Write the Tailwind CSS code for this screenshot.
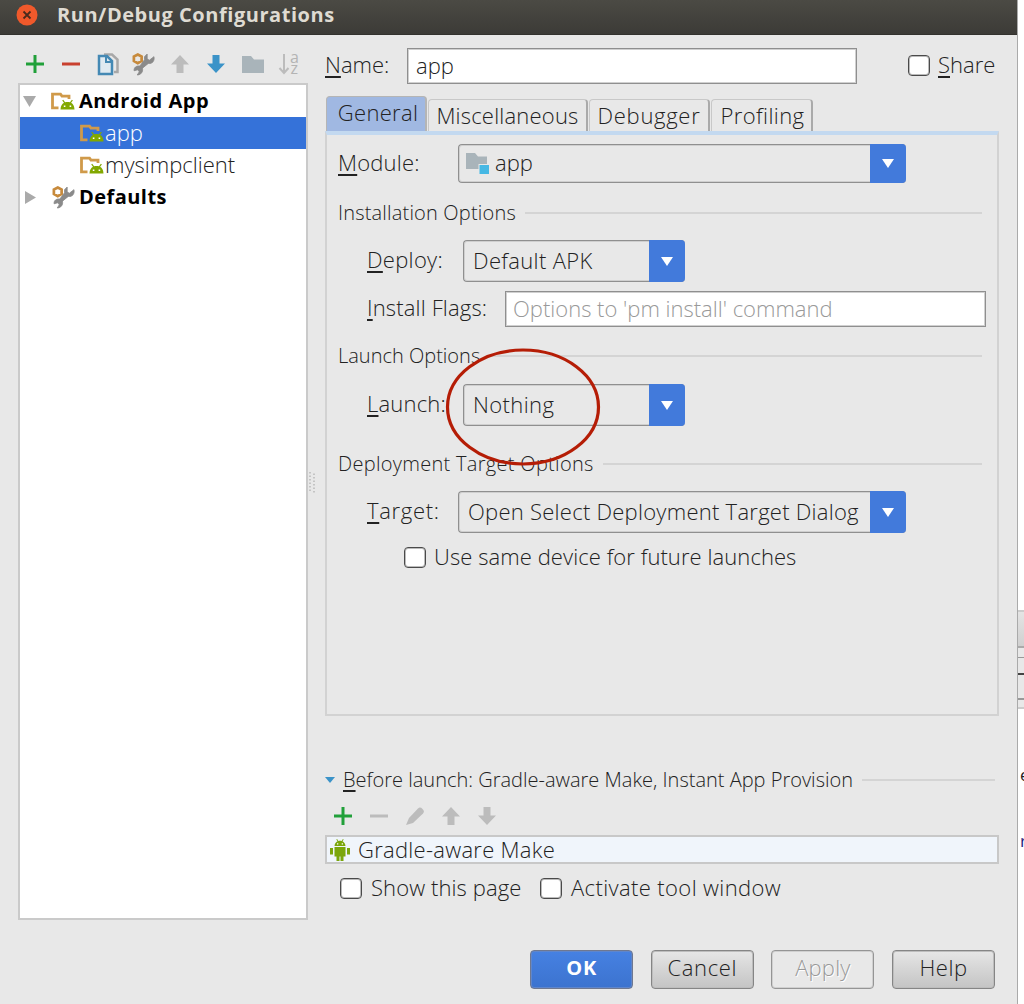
<!DOCTYPE html>
<html lang="en">
<head>
    <meta charset="UTF-8">
    <meta name="viewport" content="width=device-width, initial-scale=1.0">
    <title>Run/Debug Configurations</title>
    <script src="https://cdn.jsdelivr.net/npm/@tailwindcss/browser@4"></script>
</head>
<body class="flex w-[1024px] h-[1004px] overflow-hidden bg-white font-['Open_Sans',sans-serif] font-[330] text-[22px] leading-8 text-[#222] whitespace-nowrap">
    <!-- Shared icons -->
    <svg class="hidden">
        <symbol id="plus" viewBox="0 0 18 18"><path d="M7.5 0h3v7.5H18v3h-7.5V18h-3v-7.5H0v-3h7.5z"/></symbol>
        <symbol id="minus" viewBox="0 0 18 18"><path d="M0 7.500h18v3H0z"/></symbol>
        <symbol id="up" viewBox="0 0 18 18"><path d="M9 0l9 9.500h-5.500V18h-7V9.500H0z"/></symbol>
        <symbol id="down" viewBox="0 0 18 18"><path d="M9 18l9-9.500h-5.500V0h-7v8.500H0z"/></symbol>
        <symbol id="tools" viewBox="0 0 22 22">
            <path d="M5.500 1.500l3.700 2v4.200l-3.700 2-3.700-2V3.500z" fill="none" stroke="#c78a3c" stroke-width="2.600"/>
            <path d="M12 6.500V3.500L14.500 1v4.500l2 1.500 4.500-3.500c.8 4-1.500 7-5.500 6.500L10 14.500c.8 3.500-1.500 6.500-5 6.500l2-3-1.500-2-3.500 1c-.3-3 2-5 5.500-4.500z" fill="#8a8a8a" stroke="#8a8a8a" stroke-width=".8"/>
        </symbol>
        <symbol id="module" viewBox="0 0 24 18">
            <path d="M7.500 15.800H1.500V2.200h8l1.500 2h7V7" fill="none" stroke="#d09a4a" stroke-width="2.800"/>
            <path d="M9.500 17.500c.2-3.500 1.500-5.500 3.500-6.700l-1.800-2.300 1-.7 1.900 2.500c1.800-.5 3.200-.5 4.900 0l1.900-2.500 1 .7-1.800 2.300c2 1.200 3.200 3.200 3.400 6.700z" fill="#82a800"/>
            <path d="M12.800 13.500h1.600v1.600h-1.600zM18.600 13.500h1.600v1.600h-1.600z" fill="#fff"/>
        </symbol>
        <symbol id="arrow" viewBox="0 0 12 9"><path d="M0 0h12L6 9z" fill="#fff"/></symbol>
    </svg>

    <div class="relative flex flex-col w-[1018px] h-full shrink-0 bg-[#e8e8e8] border-r border-[#aaa]">
        <!-- Title bar -->
        <div class="flex items-center h-[35px] pl-4 pb-[5px] bg-linear-to-b from-[#4b4a44] to-[#3c3b37] border-b border-[#33322e]">
            <svg class="w-[22px] h-[22px]" viewBox="0 0 22 22"><circle cx="11" cy="11" r="10.500" fill="#f0592b"/><path d="M7.500 7.500l7 7M14.500 7.500l-7 7" stroke="#4a2a1c" stroke-width="1.800"/></svg>
            <span class="ml-[19px] font-bold text-[20px] tracking-[0.54px] text-[#dfdbd2]">Run/Debug Configurations</span>
        </div>

        <div class="flex h-[885px] pl-[18px]">
            <!-- Configuration tree -->
            <div class="w-[290px] flex flex-col">
                <div class="grid grid-cols-8 h-[48px] pt-[10px] -ml-[1px] mr-[1px] items-center justify-items-center">
                    <svg class="w-[18px] h-[18px]" fill="#21a03a"><use href="#plus"/></svg>
                    <svg class="w-[18px] h-[18px]" fill="#c9402f"><use href="#minus"/></svg>
                    <svg class="w-[22px] h-[24px]" viewBox="0 0 22 24" fill="none"><path d="M7 2.500h8l5.500 5V20H17" stroke="#a8a8a8" stroke-width="2.500"/><path d="M2 4h8l5 5v13H2z" fill="#dfeaf1" stroke="#4489b4" stroke-width="2.500"/><path d="M9 4v6h6" stroke="#4489b4" stroke-width="2"/></svg>
                    <svg class="w-[23px] h-[23px]"><use href="#tools"/></svg>
                    <svg class="w-[18px] h-[18px]" fill="#bcbcbc"><use href="#up"/></svg>
                    <svg class="w-[18px] h-[18px]" fill="#3b93c8"><use href="#down"/></svg>
                    <svg class="w-[22px] h-[17px]" viewBox="0 0 22 17"><path d="M0 0h9l3 3.500h10V17H0z" fill="#a9b4ba"/></svg>
                    <svg class="w-[22px] h-[24px] overflow-visible" viewBox="0 0 22 24"><path d="M6 2v18M1.500 16L6 21l4.500-5" fill="none" stroke="#bcbcbc" stroke-width="2"/><text x="12" y="10.500" font-size="16" fill="#b4b4b4" font-weight="400">a</text><text x="12.500" y="22" font-size="16" fill="#b4b4b4" font-weight="400">z</text></svg>
                </div>
                <div class="flex-1 bg-white border-2 border-[#cacaca]">
                    <div class="flex items-center h-[32px] pl-[3px] font-bold text-[20px] text-black">
                        <svg class="w-[13px] h-[11px] mr-[15px]" viewBox="0 0 13 11"><path d="M0 0h13L6.500 11z" fill="#aaa"/></svg>
                        <svg class="w-6 h-[18px] mr-1"><use href="#module"/></svg>
                        <span class="tracking-[0.55px]">Android App</span>
                    </div>
                    <div class="flex items-center h-8 pl-[60px] bg-[#3572d9] text-white">
                        <svg class="w-6 h-[18px] mr-[1px]"><use href="#module"/></svg>
                        <span class="pb-0.5">app</span>
                    </div>
                    <div class="flex items-center h-8 pl-[60px]">
                        <svg class="w-6 h-[18px] mr-[1px]"><use href="#module"/></svg>
                        <span class="pb-0.5">mysimpclient</span>
                    </div>
                    <div class="flex items-center h-8 pl-[5px] font-bold text-[20px] text-black">
                        <svg class="w-[11px] h-[13px] mr-[16px]" viewBox="0 0 11 13"><path d="M0 0v13L11 6.500z" fill="#aaa"/></svg>
                        <svg class="w-[23px] h-[23px] mr-[4px]"><use href="#tools"/></svg>
                        <span class="tracking-[0.45px]">Defaults</span>
                    </div>
                </div>
            </div>

            <!-- Splitter grip -->
            <div class="w-[17px] pt-[437px]">
                <svg class="w-[8px] h-[21px]" viewBox="0 0 8 21" stroke="#b8b8b8" stroke-width="1.500" stroke-dasharray="1.500 2"><path d="M2 0v21M6 1.500v19"/></svg>
            </div>

            <!-- Settings -->
            <div class="w-[674px] flex flex-col">
                <div class="flex items-center h-9 mt-[13px]">
                    <span class="w-[82px] pb-[4px]"><u class="underline-offset-3 decoration-[1.5px]">N</u>ame:</span>
                    <div class="w-[450px] h-9 flex items-center pl-2 bg-white border border-[#8f8f8f] shadow-[inset_0_0_0_1px_#d0d0d0]"><span class="pb-0.5">app</span></div>
                    <span class="w-[22px] h-[21px] -mt-0.5 ml-[51px] mr-2 bg-white border border-[#4a4a4a] shadow-[inset_0_0_0_1px_#bbb] rounded"></span>
                    <span class="pb-[4px]"><u class="underline-offset-3 decoration-[1.5px]">S</u>hare</span>
                </div>

                <div class="flex items-end h-[47px] gap-[1px] pl-[1px]">
                    <div class="w-[101px] h-[35px] flex justify-center bg-[#a0b8e2] border border-[#b5b5b5] border-r-2 border-b-0 rounded-t"><span class="pl-1 tracking-[0.3px] -mt-px">General</span></div>
                    <div class="w-[160px] h-8 flex justify-center border border-[#c8c8c8] border-b-0 border-r-2 border-r-[#aaa] rounded-t"><span class="tracking-[0.2px] -mt-px">Miscellaneous</span></div>
                    <div class="w-[121px] h-8 flex justify-center border border-[#c8c8c8] border-b-0 border-r-2 border-r-[#aaa] rounded-t"><span class="tracking-[0.7px] -mt-px">Debugger</span></div>
                    <div class="w-[102px] h-8 flex justify-center border border-[#c8c8c8] border-b-0 border-r-2 border-r-[#aaa] rounded-t"><span class="tracking-[0.4px] -mt-px pl-[2px]">Profiling</span></div>
                </div>

                <div class="h-[585px] border-2 border-t-4 border-[#d2d2d2] border-t-[#c3d9f0] pl-[11px]">
                    <div class="flex items-center mt-[9px] h-[39px]">
                        <span class="w-[120px] pb-[4px] tracking-[0.2px]"><u class="underline-offset-3 decoration-[1.5px]">M</u>odule:</span>
                        <div class="flex w-[448px] h-full border border-r-0 border-[#8f8f8f] shadow-[inset_0_0_0_1px_#cfcfcf] rounded">
                            <div class="flex-1 flex items-center pl-[7px]">
                                <svg class="w-[23px] h-[21px] mr-[6px]" viewBox="0 0 23 21"><path d="M0 0h9l3 3.500h9V16H0z" fill="#a9b4ba"/><path d="M12.500 11H23v10H12.500z" fill="#e8e8e8"/><path d="M13.500 12H23v9h-9.500z" fill="#46b8e4"/></svg>
                                <span class="pb-[3px]">app</span>
                            </div>
                            <div class="flex items-center justify-center w-9 -my-px bg-[#427adb] rounded-r"><svg class="w-[12px] h-[9px]"><use href="#arrow"/></svg></div>
                        </div>
                    </div>

                    <div class="flex items-center mt-[14px] h-8 text-[20px]">
                        <span class="pb-px tracking-[0.18px]">Installation Options</span>
                        <div class="ml-[9px] mr-[15px] flex-1 border-t-2 border-[#d4d4d4]"></div>
                    </div>
                    <div class="flex items-center mt-[11px] h-[42px] pl-[29px]">
                        <span class="w-[96px] pb-[4px] tracking-[0.3px]"><u class="underline-offset-3 decoration-[1.5px]">D</u>eploy:</span>
                        <div class="flex w-[222px] h-full border border-r-0 border-[#8f8f8f] shadow-[inset_0_0_0_1px_#cfcfcf] rounded">
                            <div class="flex-1 flex items-center pl-[9px]"><span class="pb-0.5 tracking-[0.35px]">Default APK</span></div>
                            <div class="flex items-center justify-center w-9 -my-px bg-[#427adb] rounded-r"><svg class="w-[12px] h-[9px]"><use href="#arrow"/></svg></div>
                        </div>
                    </div>
                    <div class="flex items-center mt-[9px] h-9 pl-[29px]">
                        <span class="w-[138px] pb-[4px] tracking-[0.15px]"><u class="underline-offset-3 decoration-[1.5px]">I</u>nstall Flags:</span>
                        <div class="flex items-center w-[481px] h-full pl-[7px] bg-white border border-[#8f8f8f] shadow-[inset_0_0_0_1px_#d0d0d0] text-[#999]"><span class="pb-0.5">Options to 'pm install' command</span></div>
                    </div>

                    <div class="flex items-center mt-[13px] h-8 text-[20px]">
                        <span class="pb-px">Launch Options</span>
                        <div class="ml-[9px] mr-[15px] flex-1 border-t-2 border-[#d4d4d4]"></div>
                    </div>
                    <div class="flex items-center mt-[12px] h-[42px] pl-[29px]">
                        <span class="w-[96px] pb-[4px] tracking-[0.2px]"><u class="underline-offset-3 decoration-[1.5px]">L</u>aunch:</span>
                        <div class="flex w-[222px] h-full border border-r-0 border-[#8f8f8f] shadow-[inset_0_0_0_1px_#cfcfcf] rounded">
                            <div class="flex-1 flex items-center pl-[9px]"><span class="pb-0.5 tracking-[0.4px]">Nothing</span></div>
                            <div class="flex items-center justify-center w-9 -my-px bg-[#427adb] rounded-r"><svg class="w-[12px] h-[9px]"><use href="#arrow"/></svg></div>
                        </div>
                    </div>

                    <div class="flex items-center mt-[22px] h-8 text-[20px]">
                        <span class="tracking-[0.3px]">Deployment Target Options</span>
                        <div class="ml-[9px] mr-[15px] flex-1 border-t-2 border-[#d4d4d4]"></div>
                    </div>
                    <div class="flex items-center mt-[11px] h-[42px] pl-[29px]">
                        <span class="w-[91px] pb-[4px] tracking-[0.7px]"><u class="underline-offset-3 decoration-[1.5px]">T</u>arget:</span>
                        <div class="flex w-[448px] h-full border border-r-0 border-[#8f8f8f] shadow-[inset_0_0_0_1px_#cfcfcf] rounded">
                            <div class="flex-1 flex items-center pl-[9px]"><span class="pb-0.5 tracking-[0.26px]">Open Select Deployment Target Dialog</span></div>
                            <div class="flex items-center justify-center w-9 -my-px bg-[#427adb] rounded-r"><svg class="w-[12px] h-[9px]"><use href="#arrow"/></svg></div>
                        </div>
                    </div>
                    <div class="flex items-center mt-[8px] h-8 pl-[66px]">
                        <span class="w-[22px] h-[21px] mr-2 bg-white border border-[#4a4a4a] shadow-[inset_0_0_0_1px_#bbb] rounded"></span>
                        <span class="pb-[3px] tracking-[0.07px]">Use same device for future launches</span>
                    </div>
                </div>

                <!-- Before launch -->
                <div class="flex items-center mt-[48px] h-8 text-[20px]">
                    <svg class="w-[10px] h-[6px] mr-2" viewBox="0 0 10 6"><path d="M0 0h10L5 6z" fill="#3b93c8"/></svg>
                    <span><u class="underline-offset-3 decoration-[1.5px]">B</u>efore launch: Gradle-aware Make, Instant App Provision</span>
                    <div class="ml-[9px] mr-1 flex-1 border-t-2 border-[#d4d4d4]"></div>
                </div>
                <div class="flex items-center gap-[18px] h-[39px] pl-[9px] fill-[#bcbcbc]">
                    <svg class="w-[18px] h-[18px] fill-[#21a03a]"><use href="#plus"/></svg>
                    <svg class="w-[18px] h-[18px]"><use href="#minus"/></svg>
                    <svg class="w-[18px] h-[18px]" viewBox="0 0 18 18"><path d="M0 18l3-7L12 1.500q2-2 4.500.5t.5 4.500L7 16z"/></svg>
                    <svg class="w-[18px] h-[18px]"><use href="#up"/></svg>
                    <svg class="w-[18px] h-[18px]"><use href="#down"/></svg>
                </div>
                <div class="flex items-center h-[29px] pl-[3px] bg-[#f0f5fb] border-2 border-[#c8c8c8]">
                    <svg class="w-[20px] h-[22px] mr-2" viewBox="0 0 20 22" fill="#7ba60b"><path d="M4.500 7c.2-2.500 1.500-4 3-4.700L6.300.4l.8-.4 1.200 2c1-.3 2.400-.3 3.400 0l1.200-2 .8.4-1.200 1.900c1.500.7 2.800 2.200 3 4.700zM4.500 8h11v9.500h-2V22h-3v-4.500h-1V22h-3v-4.500h-2zM0 9h3v6.500H0zM17 9h3v6.500h-3z"/><path d="M7 4.200h1.300v1.300H7zM11.700 4.200H13v1.300h-1.300z" fill="#fff"/></svg>
                    <span class="pb-0.5 tracking-[0.28px]">Gradle-aware Make</span>
                </div>
                <div class="flex items-center h-[48px] pl-[15px]">
                    <span class="w-[22px] h-[21px] mr-[9px] bg-white border border-[#4a4a4a] shadow-[inset_0_0_0_1px_#bbb] rounded"></span>
                    <span class="w-[153px] pb-[3px] tracking-[0.1px]">Show this page</span>
                    <span class="w-[22px] h-[21px] ml-[16px] mr-[9px] bg-white border border-[#4a4a4a] shadow-[inset_0_0_0_1px_#bbb] rounded"></span>
                    <span class="pb-[3px] tracking-[0.38px]">Activate tool window</span>
                </div>
            </div>
        </div>

        <!-- Dialog buttons -->
        <div class="flex justify-end gap-[17.600px] pr-[22px] mt-[30px] leading-[30px]">
            <button class="w-[103px] h-[39px] pb-[3px] rounded border border-[#6f7890] shadow-[inset_0_0_0_1px_#5f86cc] bg-linear-to-b from-[#4681e2] to-[#3c73cf] text-white font-bold text-[20px] tracking-[0.8px]">OK</button>
            <button class="w-[103px] h-[39px] pb-[5px] rounded border border-[#858585] shadow-[inset_0_0_0_1px_#bdbdbd] bg-linear-to-b from-[#e6e6e6] to-[#c4c4c4] tracking-[0.6px]">Cancel</button>
            <button class="w-[103px] h-[39px] pb-[5px] rounded border border-[#959595] shadow-[inset_0_0_0_1px_#d0d0d0] text-[#999] text-shadow-[1px_1px_0_#fff] tracking-[0.2px]">Apply</button>
            <button class="w-[103px] h-[39px] pb-[5px] rounded border border-[#858585] shadow-[inset_0_0_0_1px_#bdbdbd] bg-linear-to-b from-[#e6e6e6] to-[#c4c4c4] tracking-[0.5px]">Help</button>
        </div>

        <!-- Highlight around the launch option -->
        <svg class="absolute left-[440px] top-[344px] w-[166px] h-[126px]" viewBox="0 0 166 126"><ellipse cx="83" cy="63" rx="75.500" ry="57" fill="none" stroke="#b51d06" stroke-width="3.200"/></svg>
    </div>

    <!-- Editor behind the dialog -->
    <div class="flex flex-col w-[6px] pt-[610px] overflow-hidden text-[17px] font-normal">
        <div class="h-[38px] bg-linear-to-b from-[#e4e4e4] to-[#d0d0d0] border-y-2 border-t-[#ccc] border-b-[#aaa]"></div>
        <div class="h-[10px] bg-[#e8e8e8] border-b border-[#999]"></div>
        <div class="h-[17px] bg-[#e8e8e8] border-b-2 border-[#444]"></div>
        <div class="h-[25px] bg-[#e8e8e8] border-b-2 border-[#999]"></div>
        <div class="h-[9px] bg-[#e8e8e8] border-b-2 border-[#ccc]"></div>
        <div class="mt-[50px] h-8 pl-[2px]">e</div>
        <div class="mt-[34px] h-8 pl-[2px] text-[#1c1c80]">r</div>
    </div>
</body>
</html>
